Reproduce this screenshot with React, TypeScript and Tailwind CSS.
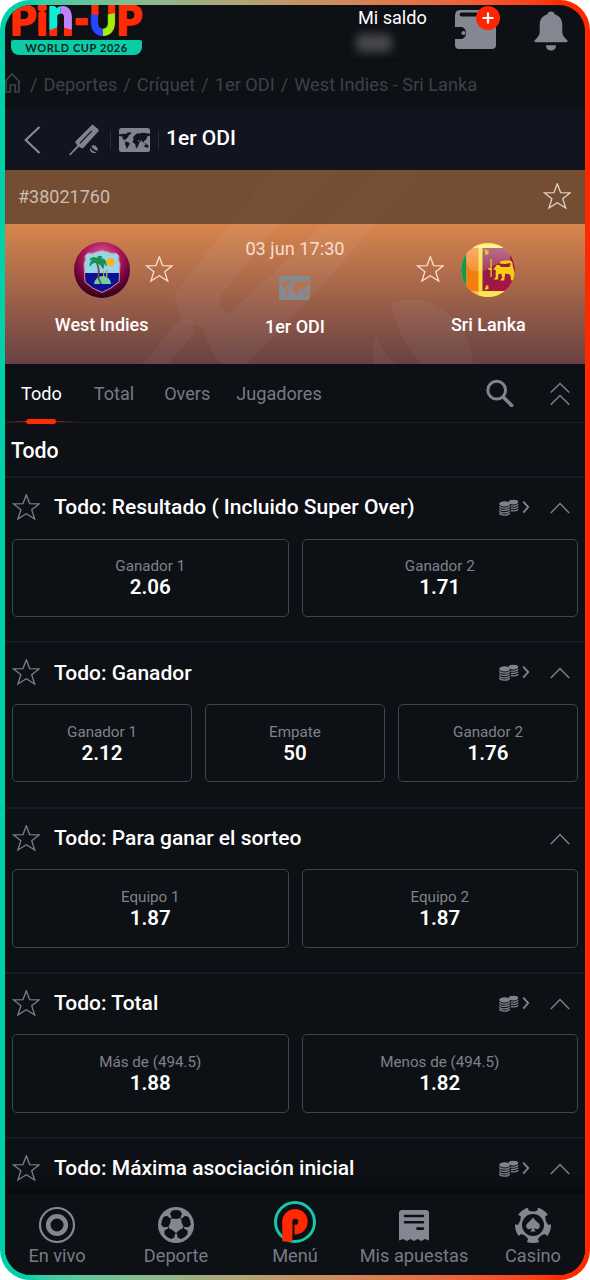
import { useState } from "react";
import type { ReactNode } from "react";

interface Outcome {
  label: string;
  odds: string;
}

interface Market {
  title: string;
  cashout: boolean;
  outcomes: Outcome[];
}

const TABS = [
  { name: "Todo", spacing: "mr-8" },
  { name: "Total", spacing: "mr-[30px]" },
  { name: "Overs", spacing: "mr-[26px]" },
  { name: "Jugadores", spacing: "" },
];

const BREADCRUMBS = ["Deportes", "Críquet", "1er ODI", "West Indies - Sri Lanka"];

const MARKETS: Market[] = [
  {
    title: "Todo: Resultado ( Incluido Super Over)",
    cashout: true,
    outcomes: [
      { label: "Ganador 1", odds: "2.06" },
      { label: "Ganador 2", odds: "1.71" },
    ],
  },
  {
    title: "Todo: Ganador",
    cashout: true,
    outcomes: [
      { label: "Ganador 1", odds: "2.12" },
      { label: "Empate", odds: "50" },
      { label: "Ganador 2", odds: "1.76" },
    ],
  },
  {
    title: "Todo: Para ganar el sorteo",
    cashout: false,
    outcomes: [
      { label: "Equipo 1", odds: "1.87" },
      { label: "Equipo 2", odds: "1.87" },
    ],
  },
  {
    title: "Todo: Total",
    cashout: true,
    outcomes: [
      { label: "Más de (494.5)", odds: "1.88" },
      { label: "Menos de (494.5)", odds: "1.82" },
    ],
  },
  { title: "Todo: Máxima asociación inicial", cashout: true, outcomes: [] },
];

function Star({ className }: { className?: string }) {
  return (
    <svg viewBox="-.3 1 28 28" className={`h-7 w-7 shrink-0 ${className ?? ""}`} fill="none" stroke="currentColor" strokeWidth="1.3">
      <path d="M14 1.8 17.3 10.6 27 10.8 19.4 16.7 22.4 26 14 20.8 5.6 26 8.6 16.7 1 10.8 10.7 10.6Z" />
    </svg>
  );
}

function ChevronUp() {
  return (
    <svg viewBox="0 0 20 12" className="h-3 w-5" fill="none" stroke="#7d808a" strokeWidth="1.4">
      <path d="M.8 11 10 1.600 19.2 11" />
    </svg>
  );
}

function Coins() {
  return (
    <svg viewBox="0 0 32 18" className="h-[18px] w-8" fill="none" stroke="#80838d" strokeWidth="1.3">
      <ellipse cx="14.4" cy="3.1" rx="4.8" ry="2.3" fill="#80838d" stroke="none" />
      <path d="M11.5 6.900c3.500.8 7.500-.2 7.500-1.900M11.8 9.300c3.200.6 7.200-.2 7.200-1.800M11.8 11.700c3.200.5 7.200-.3 7.200-1.800" />
      <ellipse cx="5.6" cy="4.9" rx="5.4" ry="2.7" fill="#80838d" stroke="none" />
      <path d="M.7 7.100c0 2.600 9.800 2.600 9.800 0M.7 9.500c0 2.600 9.800 2.600 9.800 0M.7 11.900c0 2.600 9.800 2.600 9.800 0M.7 14.100c0 2.600 9.800 2.600 9.800 0" />
      <path d="m24.200 2.600 5 5.500-5 5.500" strokeWidth="1.9" />
    </svg>
  );
}

function WorldMap({ className, land }: { className: string; land: string }) {
  return (
    <svg viewBox="0 0 31 24" className={className}>
      <rect width="31" height="24" rx="2.5" fill="#80848e" />
      <path
        fill={land}
        d="M0 6.500 4 5.700l3.200.4 1.400-1.500 3.600-.4-.6 2-2 1.200-.4 1.600-2 1.700-.8 1.600-.9-.9-1.600-.3.9 2 1.400.3 2.900.5 1.800 1.900-.8 1.300-1.200 2.200-1.100 1.900-.8-2.600-1.100-2.500.5-1.900-2.600-2.300-.3-3.100L0 7.700ZM14.400 8.800l1.800-2 2.300-1.600 2.200.4 2.300-.8 3.300.3 4.700.6v1.700l-2.400.8-.9 1.800-1 2.100-1.600.8-.7 1.800-1.100-1.200-1-1.500-.8 2.400-1.100-2.100-1.500-.4.8 1.700 1.200.3-1.100 2-.5 1.800-1.300 2.200-1.100-.2-.8-3.900-2-.7-.5-2.100 1.300-1.400-.9-.8ZM25.200 14.700l2.400.7-1 .7ZM25.300 17.300l1.600-1.100 1.800.2 1.100 2.300-1.600 1.100-2.600-.7Z"
      />
    </svg>
  );
}

function Logo() {
  return (
    <div className="w-[131px]">
      <svg viewBox="0 0 131 32" className="h-8 w-[131px] overflow-visible">
        <defs>
          <pattern id="logo-n" x="0" y="0" width="131" height="40" patternUnits="userSpaceOnUse">
            <path fill="#08efd5" d="M34 0h15.5v40H34Z" />
            <path fill="#bd83ff" d="M49.500 0H64v40H49.500Z" />
            <path fill="#ff2b06" d="M34 26q8-1 14-5l4 1q4 2 12 3v15H34Z" />
          </pattern>
          <pattern id="logo-u" x="0" y="0" width="131" height="40" patternUnits="userSpaceOnUse">
            <path fill="#2947ff" d="M76 0h16v40H76Z" />
            <path fill="#a4ef09" d="M92 0h16v40H92Z" />
            <path fill="#ff2b06" d="M76 0h32v8q-10 0-16 4-6-3-16-3Z" />
          </pattern>
        </defs>
        <g fontFamily="Lato" fontWeight="900" fontSize="41" strokeWidth="1.8" strokeLinejoin="round">
          <text x="-1" y="30" textLength="26" lengthAdjust="spacingAndGlyphs" fill="#ff2b06" stroke="#ff2b06">P</text>
          <text x="25.5" y="30" textLength="11" lengthAdjust="spacingAndGlyphs" fill="#ff2b06" stroke="#ff2b06">i</text>
          <text x="36.5" y="30" fontSize="53" textLength="26" lengthAdjust="spacingAndGlyphs" fill="url(#logo-n)" stroke="url(#logo-n)">n</text>
          <text x="63.500" y="29" textLength="14" lengthAdjust="spacingAndGlyphs" fill="#ff2b06" stroke="#ff2b06" strokeWidth="2.6">-</text>
          <text x="78.500" y="30" textLength="27" lengthAdjust="spacingAndGlyphs" fill="url(#logo-u)" stroke="url(#logo-u)">U</text>
          <text x="105.500" y="30" textLength="25.5" lengthAdjust="spacingAndGlyphs" fill="#ff2b06" stroke="#ff2b06">P</text>
        </g>
      </svg>
      <div className="mt-[3px] flex h-[15px] items-center justify-center rounded-t-[2px] rounded-b-lg bg-[#0acda5] font-[Lato] text-[11px] leading-none font-bold tracking-[.6px] whitespace-nowrap text-[#11221f]">
        WORLD CUP 2026
      </div>
    </div>
  );
}

function Header() {
  return (
    <header className="flex h-14 shrink-0 border-b border-[#090b0f] pl-[6px]">
      <Logo />
      <div className="ml-auto flex">
        <div className="mr-7 w-[69px] pt-[3px] text-[18.1px] leading-5 whitespace-nowrap">
          Mi saldo
          <div className="-ml-0.5 mt-1.5 h-[18px] w-9 rounded-md bg-[#48494d] blur-[5px]" />
        </div>
        <div className="relative mt-[5px] mr-[38px] h-10 w-[41px]">
          <svg viewBox="0 0 41 40" className="h-10 w-[41px]">
            <path fill="#838791" d="M5 0h20v2.400H6.400q-1.800 0-1.800 2T6.400 6.400H37q4 0 4 4V35q0 4-4 4H4q-4 0-4-4v-6h7a6.500 6.500 0 0 0 0-12H0V6q0-6 5-6Z" />
            <circle cx="8.500" cy="23" r="2.100" fill="#838791" />
          </svg>
          <span className="absolute -top-[4px] -right-[4px] flex h-6 w-6 items-center justify-center rounded-full bg-[#ff2400]">
            <svg viewBox="0 0 12 12" className="h-3 w-3" stroke="white" strokeWidth="2.2">
              <path d="M6 .5v11M.5 6h11" />
            </svg>
          </span>
        </div>
        <svg viewBox="0 0 34 40" className="mt-[6px] mr-[17px] h-10 w-[34px]" fill="#838791">
          <path d="M17 .5q3.200 0 3.600 2.800C26 5 28.300 9 28.300 14v7q0 4 5.200 8.500.5 1.500-.9 1.700H1.400Q0 31 .5 29.500 5.700 25 5.700 21v-7c0-5 2.300-9 7.700-10.700Q13.800.5 17 .5ZM11.800 34.300h10.400q-.8 5.200-5.200 5.200t-5.200-5.200Z" />
        </svg>
      </div>
    </header>
  );
}

function Breadcrumb() {
  return (
    <nav className="flex h-12 shrink-0 items-center text-[18.2px] whitespace-nowrap text-[#3d4049]">
      <svg viewBox="0 0 18 21" className="h-[21px] w-[18px] -translate-x-0.5 -translate-y-[3px]" fill="none" stroke="currentColor" strokeWidth="1.7">
        <path d="M1 10.500 9 2l8.300 8.500M3.200 9v11h4v-7h5v7h3.700V9" />
      </svg>
      <ol className="mb-px ml-[7px] flex gap-1.5">
        {BREADCRUMBS.map((crumb) => (
          <li key={crumb} className="flex gap-1.5">
            <span>/</span>
            {crumb}
          </li>
        ))}
      </ol>
    </nav>
  );
}

function TitleBar() {
  return (
    <div className="flex h-[61px] shrink-0 items-center bg-[#12151f]">
      <svg viewBox="0 0 17 28" className="ml-[19px] h-7 w-[17px]" fill="none" stroke="#888b94" strokeWidth="2.1">
        <path d="M15.500 1 1.700 14l13.800 13" />
      </svg>
      <svg viewBox="0 0 32 32" className="ml-[27px] h-8 w-8" fill="#80848e">
        <path d="m25 .8 5.500 4.800q.5.8 0 1.600L15.300 24q-1 .8-2 0L11 22.700 2.200 31.400 1 30.600l8.400-9L7.600 19q-.5-1 .2-2L23.800 1q.6-.5 1.200-.2Z" />
        <path d="m11.800 19.400 12-12.500" stroke="#12151f" strokeWidth="1.3" />
        <path d="M23.300 21.800q2-1.300 4.200 0 2.600 1.800 2.300 5-4.600-.4-6.500-5ZM22.100 23.200q1.300 4.400 6.500 5-3 1.800-5.400-.2-2-2.200-1.100-4.800Z" />
      </svg>
      <span className="ml-[10px] h-5 w-px bg-[#262a35]" />
      <WorldMap className="ml-2 h-6 w-[31px]" land="#12151f" />
      <span className="ml-2 h-5 w-px bg-[#262a35]" />
      <h1 className="mb-px ml-[7px] text-[21px] font-medium">1er ODI</h1>
    </div>
  );
}

function WestIndiesFlag() {
  return (
    <svg viewBox="0 0 56 56" className="h-14 w-14">
      <defs>
        <radialGradient id="wi-bg" cx=".5" cy=".28" r=".72">
          <stop offset="0" stopColor="#df609a" />
          <stop offset=".45" stopColor="#ac175c" />
          <stop offset=".75" stopColor="#690337" />
          <stop offset="1" stopColor="#2d0017" />
        </radialGradient>
        <clipPath id="wi-shield">
          <path d="M14 11q6 1 8-1l6-1.500 6 1.500q3 2 8 1l3 3q-1 4 1 8l-1 18q-8 7-17 10.500Q18 47 11 40l-1-18q2-4 1-8Z" />
        </clipPath>
      </defs>
      <circle cx="28" cy="28" r="28" fill="url(#wi-bg)" />
      <g clipPath="url(#wi-shield)">
        <path fill="#99d4e8" d="M8 6h40v46H8Z" />
        <path fill="#101096" d="M8 31h40v21H8Z" />
        <path fill="#73cfa1" d="M20 42q1-7 8-8 8 0 9 8Z" />
        <path fill="#aaa64b" d="M29 29h1.300v6H29Zm3-1h1.500v7H32Z" />
        <path fill="none" stroke="#6f4b40" strokeWidth="1.8" d="M23 21q3 8 1 14l3 7" />
        <path
          fill="#129452"
          stroke="#129452"
          strokeWidth="1.2"
          d="M24 21q-6-2-8 3 0-5 4-6-2-2-4 0 2-4 7-1 1-4 5-2-2 0-2 2 6-1 6 6-3-4-5-3 4 2 2 6-2-4-5-5Z"
        />
        <circle cx="36.500" cy="20" r="4.200" fill="#f7b421" />
      </g>
      <path d="M14 11q6 1 8-1l6-1.500 6 1.500q3 2 8 1l3 3q-1 4 1 8l-1 18q-8 7-17 10.500Q18 47 11 40l-1-18q2-4 1-8Z" fill="none" stroke="#ca928d" strokeWidth="1" />
    </svg>
  );
}

function SriLankaFlag() {
  return (
    <svg viewBox="0 0 56 56" className="h-14 w-14">
      <defs>
        <clipPath id="sl-ball">
          <circle cx="28" cy="28" r="27" />
        </clipPath>
        <linearGradient id="sl-gloss" x1="0" x2="0" y1="0" y2="1">
          <stop offset="0" stopColor="white" stopOpacity=".4" />
          <stop offset="1" stopColor="white" stopOpacity=".14" />
        </linearGradient>
        <linearGradient id="sl-field" x1="0" x2="1" y1="0" y2="1">
          <stop offset="0" stopColor="#82213f" />
          <stop offset="1" stopColor="#b1114c" />
        </linearGradient>
      </defs>
      <g clipPath="url(#sl-ball)">
        <path fill="#f5dc36" d="M0 0h56v56H0Z" />
        <path fill="#149750" d="M0 0h6.500v56H0Z" />
        <path fill="#f77d10" d="M6.500 0h12v56h-12Z" />
        <path fill="url(#sl-field)" d="M22.500 6H56v43H22.500Z" />
        <path fill="#fff06a" d="M0 0h56v6H0Z" fillOpacity=".8" />
        <path fill="url(#sl-gloss)" d="M6 3h44v15q-12 2-20 8-9 6-20 2Q5 22 6 3Z" />
        <path fill="#f2c71d" d="m24.500 7 4 2v3l-3 1ZM24.500 48l4-1v-3l-2-1Z" />
        <path
          fill="#f5cf12"
          d="M30.500 17h1.200v10h2l1.500-2q1-3 4-2l2 2h8q2-2 1-4l-5 1-6-.500 2-2.500 5-.500q7-1 6.500 5l2 8-1 5 1.500 2h-4l-1-6-5-1-1 7h-4l2-3-1-4-3 1v5h-4.500l2-2.500v-7l-4-1v8h-1.200v-7h-2v-2h2Z"
        />
        <path fill="#fff06a" fillOpacity=".6" d="M8 49q20 1 42 0v8H8Z" />
      </g>
    </svg>
  );
}

function HeroArt() {
  return (
    <svg viewBox="5 170 580 194" className="pointer-events-none absolute inset-0 h-full w-full" fill="url(#art-fill)">
      <defs>
        <linearGradient id="art-fill" gradientUnits="userSpaceOnUse" x1="0" x2="0" y1="170" y2="364">
          <stop offset=".278" stopColor="white" stopOpacity=".014" />
          <stop offset=".278" stopColor="white" stopOpacity=".045" />
          <stop offset="1" stopColor="white" stopOpacity=".035" />
        </linearGradient>
      </defs>
      <path
        d="M273 170h150L334 272l-89 94q-6 4-12 1l-17-7-14-33-19-5q-9-20-8-29ZM341 170l-73 66-49 62q2 16 10 15l49-44 101-99Z"
        fillRule="evenodd"
      />
      <path d="m143 364 31-39q8-9 17-4 7 7 0 16l-23 27Z" />
      <path d="M391 303q34-11 61 14 28 29 19 68-64-7-80-82ZM376 335q-8 25 4 45h50q-44-12-54-45Z" />
    </svg>
  );
}

function MatchHero() {
  return (
    <section className="relative shrink-0">
      <div className="flex h-[54px] items-center justify-between bg-[#754d33] pr-[14px] pl-[13px] text-[18px] text-[#cbbcb3]">
        <span className="pb-px">#38021760</span>
        <Star className="text-[#e1d1c5]" />
      </div>
      <div className="grid h-[140px] grid-cols-3 bg-linear-to-b from-[#d8864d] via-[#a06349] to-[#694143] text-[18px] leading-6">
        <div className="flex flex-col items-center pt-[18px]">
          <div className="flex items-center gap-4">
            <span className="w-7" />
            <WestIndiesFlag />
            <Star className="-ml-px text-[#fbe0cd]" />
          </div>
          <p className="mt-[15px] font-medium">West Indies</p>
        </div>
        <div className="flex flex-col items-center pt-[13px]">
          <p className="text-[18.200px] text-[#f7dccb]">03 jun 17:30</p>
          <WorldMap className="mt-[15px] h-6 w-[31px]" land="#b26d49" />
          <p className="mt-[15px] font-medium">1er ODI</p>
        </div>
        <div className="flex flex-col items-center pt-[18px]">
          <div className="flex items-center gap-4">
            <Star className="text-[#fbe0cd]" />
            <SriLankaFlag />
            <span className="w-7" />
          </div>
          <p className="mt-[15px] font-medium">Sri Lanka</p>
        </div>
      </div>
      <HeroArt />
    </section>
  );
}

function Tabs() {
  const [active, setActive] = useState("Todo");

  return (
    <div className="flex h-[59px] shrink-0 items-stretch border-b border-[#1b1e26] pl-4">
      <div className="flex">
        {TABS.map(({ name, spacing }) => (
          <button
            key={name}
            type="button"
            onClick={() => setActive(name)}
            className={`relative pt-0.5 text-[18.1px] ${spacing} ${name === active ? "text-white" : "text-[#787b85]"}`}
          >
            {name}
            {name === active ? (
              <span className="absolute -bottom-[2px] left-1/2 flex h-[5px] w-[76px] -translate-x-1/2 items-center justify-center">
                <span className="absolute h-px w-full bg-linear-to-r from-transparent via-[#ff2a00] to-transparent" />
                <span className="h-[5px] w-[30px] rounded-full bg-[#ff2a00]" />
              </span>
            ) : null}
          </button>
        ))}
      </div>
      <div className="ml-auto flex items-center pr-[15px]">
        <svg viewBox="0 0 28 28" className="mr-9 h-7 w-7" fill="none" stroke="#80848e">
          <circle cx="10.700" cy="11.200" r="8.900" strokeWidth="3" />
          <path d="m17.700 18.500 8 8" strokeWidth="3.6" strokeLinecap="round" />
        </svg>
        <svg viewBox="0 0 20 24" className="mt-0.5 h-6 w-5" fill="none" stroke="#7d808a" strokeWidth="1.4">
          <path d="M.7 10.500 10 1.400l9.300 9.100M.7 22.800l9.300-9.400 9.300 9.400" />
        </svg>
      </div>
    </div>
  );
}

function MarketSection({ market }: { market: Market }) {
  return (
    <section className="h-[165.300px] shrink-0 border-t-2 border-[#181b23] px-[7px]">
      <div className="flex h-[60px] items-center pr-2">
        <Star className="mr-[14px] text-[#7b7e88]" />
        <h3 className="text-[21px] font-medium whitespace-nowrap">{market.title}</h3>
        <div className="ml-auto flex items-center gap-[19px]">
          {market.cashout ? <Coins /> : null}
          <ChevronUp />
        </div>
      </div>
      {market.outcomes.length > 0 ? (
        <div className="mt-[.6px] flex gap-[13px]">
          {market.outcomes.map((outcome) => (
            <button
              key={outcome.label}
              type="button"
              className="flex h-[78.500px] flex-1 flex-col items-center justify-center rounded-[5px] border-[1.5px] border-[#41434d] pb-px"
            >
              <span className="text-[15.2px] leading-5 text-[#7f828b]">{outcome.label}</span>
              <span className="text-[20.5px] leading-[22px] font-semibold">{outcome.odds}</span>
            </button>
          ))}
        </div>
      ) : null}
    </section>
  );
}

function LiveIcon() {
  return (
    <svg viewBox="0 0 38 38" className="h-[38px] w-[38px]" fill="none" stroke="#838791">
      <circle cx="19" cy="19" r="17" strokeWidth="2.2" />
      <circle cx="19" cy="19" r="8.800" strokeWidth="4.6" />
    </svg>
  );
}

function BallIcon() {
  return (
    <svg viewBox="0 0 38 38" className="h-[38px] w-[38px]">
      <circle cx="19" cy="19" r="18" fill="#838791" />
      {[0, 72, 144, 216, 288].map((angle) => (
        <g key={angle} transform={`rotate(${angle} 19 19)`}>
          <path d="M13 7.700 14.900 4.800q4.100-1.500 8.200 0L25 7.700l-1.800 4.200q-4.200 2-8.400 0Z" fill="#0d1015" />
          <path d="M22.500 11.400 25 13.700" stroke="#0d1015" strokeWidth="1" />
        </g>
      ))}
    </svg>
  );
}

function MenuIcon() {
  return (
    <svg viewBox="0 0 42 42" className="h-[42px] w-[42px]">
      <circle cx="21" cy="21" r="19.500" fill="#0d1015" stroke="#17c8a6" strokeWidth="3" />
      <rect x="8.300" y="19" width="10.400" height="21.600" rx="1" fill="#ff2800" />
      <circle cx="21" cy="20.800" r="12.700" fill="#ff2800" />
      <rect x="18.500" y="21" width="2" height="17.500" fill="#0d1015" />
      <circle cx="21.300" cy="20.800" r="3" fill="#0d1015" />
    </svg>
  );
}

function BetsIcon() {
  return (
    <svg viewBox="0 0 32 38" className="h-[38px] w-8">
      <path fill="#838791" d="M4 4h24q3 0 3 3v27.500L27 33l-3.800 2-3.600-2-3.600 2-3.600-2-3.600 2L5 33l-4 1.500V7q0-3 3-3Z" />
      <path d="M7 10h18M7 16.300h18M19.400 22.600H25" stroke="#0d1015" strokeWidth="2.6" strokeLinecap="round" />
    </svg>
  );
}

function CasinoIcon() {
  return (
    <svg viewBox="0 0 38 38" className="h-[38px] w-[38px]">
      <circle cx="19" cy="19" r="18" fill="#838791" />
      {[0, 72, 144, 216, 288].map((angle) => (
        <path key={angle} transform={`rotate(${angle} 19 19)`} d="M13.600 0h10.800l-1 4.600q-4.400 2-8.800 0Z" fill="#0d1015" />
      ))}
      <circle cx="19" cy="19" r="11" fill="#0d1015" />
      <path fill="#838791" d="M19 11.500q2 3 5.300 5.600 2.700 2.700.8 5.100-2.400 2-4.900-.2.200 2.200 1.500 3.500h-5.400q1.300-1.300 1.500-3.500-2.500 2.200-4.900.2-1.900-2.400.8-5.100Q17 14.500 19 11.500Z" />
    </svg>
  );
}

function NavItem({ label, children }: { label: string; children: ReactNode }) {
  return (
    <button type="button" className="flex w-[119px] shrink-0 flex-col items-center text-[18.200px] leading-6 whitespace-nowrap text-[#787b85]">
      <span className="flex h-[42px] items-end justify-center">{children}</span>
      {label}
    </button>
  );
}

export default function App() {
  return (
    <div className="h-[1280px] w-[590px] bg-white">
      <div className="h-full rounded-[30px] bg-linear-to-r from-[#00d1a8] from-5% to-[#ff2900] to-95% p-[5px]">
        <div className="flex h-full flex-col overflow-hidden rounded-[26px] bg-[#0d1015] font-[Roboto,sans-serif] text-white">
          <Header />
          <Breadcrumb />
          <TitleBar />
          <MatchHero />
          <Tabs />
          <h2 className="flex h-[53px] shrink-0 items-center pt-0.5 pl-[6px] text-[21.300px] font-medium">Todo</h2>
          <main className="flex min-h-0 flex-1 flex-col overflow-hidden">
            {MARKETS.map((market) => (
              <MarketSection key={market.title} market={market} />
            ))}
          </main>
          <footer className="relative flex h-[81px] shrink-0 justify-center bg-[#0d1015] pt-2 shadow-[0_-2px_8px_4px_#090b0f]">
            <NavItem label="En vivo"><LiveIcon /></NavItem>
            <NavItem label="Deporte"><BallIcon /></NavItem>
            <NavItem label="Menú"><span className="mb-px"><MenuIcon /></span></NavItem>
            <NavItem label="Mis apuestas"><BetsIcon /></NavItem>
            <NavItem label="Casino"><CasinoIcon /></NavItem>
          </footer>
        </div>
      </div>
    </div>
  );
}
